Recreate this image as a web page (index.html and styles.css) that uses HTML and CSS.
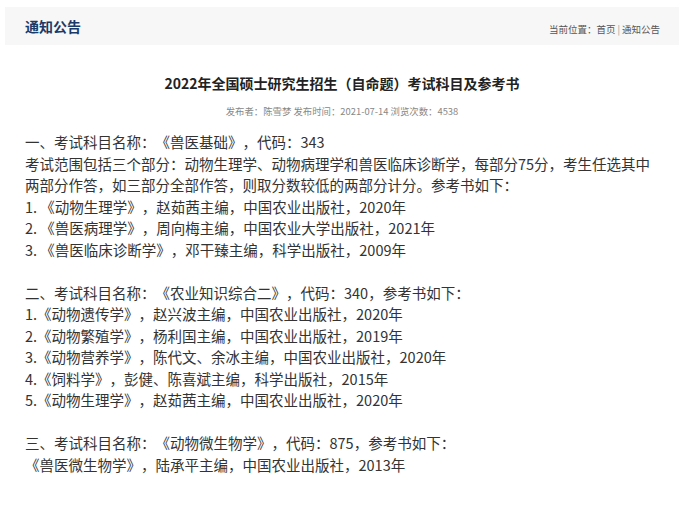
FILE: index.html
```html
<!DOCTYPE html>
<html lang="zh">
<head>
    <meta charset="UTF-8">
    <meta name="viewport" content="width=device-width, initial-scale=1.0">
    <title>通知公告</title>
    <link rel="stylesheet" href="styles.css">
</head>
<body>
    <div class="page">
        <div class="header">
            <h2>通知公告</h2>
            <div class="crumb">当前位置：<a href="#">首页</a><span class="sep">|</span><a href="#">通知公告</a></div>
        </div>

        <div class="article">
            <h1>2022年全国硕士研究生招生（自命题）考试科目及参考书</h1>
            <div class="meta">发布者：陈雪梦 发布时间：2021-07-14 浏览次数：4538</div>

            <div class="content">
                <p>一、考试科目名称：《兽医基础》，代码：343</p>
                <p>考试范围包括三个部分：动物生理学、动物病理学和兽医临床诊断学，每部分75分，考生任选其中两部分作答，如三部分全部作答，则取分数较低的两部分计分。参考书如下：</p>
                <p>1. 《动物生理学》，赵茹茜主编，中国农业出版社，2020年</p>
                <p>2. 《兽医病理学》，周向梅主编，中国农业大学出版社，2021年</p>
                <p>3. 《兽医临床诊断学》，邓干臻主编，科学出版社，2009年</p>
                <p class="blank">&nbsp;</p>
                <p>二、考试科目名称：《农业知识综合二》，代码：340，参考书如下：</p>
                <p>1.《动物遗传学》，赵兴波主编，中国农业出版社，2020年</p>
                <p>2.《动物繁殖学》，杨利国主编，中国农业出版社，2019年</p>
                <p>3.《动物营养学》，陈代文、余冰主编，中国农业出版社，2020年</p>
                <p>4.《饲料学》，彭健、陈喜斌主编，科学出版社，2015年</p>
                <p>5.《动物生理学》，赵茹茜主编，中国农业出版社，2020年</p>
                <p class="blank">&nbsp;</p>
                <p>三、考试科目名称：《动物微生物学》，代码：875，参考书如下：</p>
                <p>《兽医微生物学》，陆承平主编，中国农业出版社，2013年</p>
            </div>
        </div>
    </div>
</body>
</html>
```

FILE: styles.css
```css
body {
    margin: 0;
    background: #fff;
    font-family: "Noto Sans CJK SC", "Noto Sans", sans-serif;
    color: #333;
    text-spacing-trim: space-all;
}

.page {
    width: 674px;
    margin-left: 5px;
}

.header {
    margin-top: 7px;
    height: 38px;
    background: #f7f7f7;
    display: flex;
    align-items: center;
    justify-content: space-between;
    padding: 0 19px 0 20px;
}

.header h2 {
    margin: 0;
    font-size: 14px;
    font-weight: bold;
    color: #1b3a68;
}

.crumb {
    font-size: 9.5px;
    color: #555;
    padding-top: 6px;
}

.crumb a {
    color: #555;
    text-decoration: none;
}

.crumb .sep {
    color: #999;
    margin: 0 2px;
}

.article h1 {
    margin: 28px 0 0;
    font-size: 14px;
    line-height: 20px;
    font-weight: bold;
    color: #222;
    text-align: center;
}

.meta {
    margin-top: 11px;
    font-size: 9.4px;
    line-height: 14px;
    color: #888;
    text-align: center;
}

.content {
    margin-top: 13px;
    padding: 0 16px 0 20px;
    font-size: 14.5px;
    line-height: 21.5px;
    color: #333;
}

.content p {
    margin: 0;
}
```
